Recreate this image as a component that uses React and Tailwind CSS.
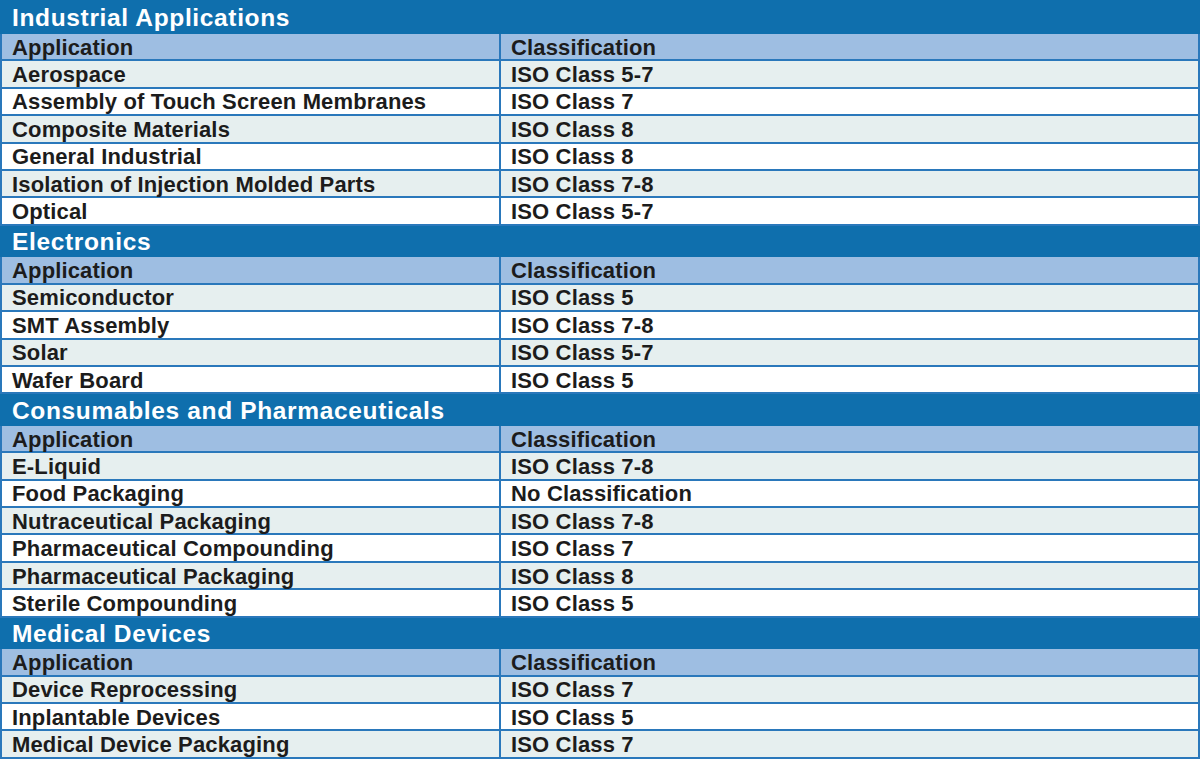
import React from "react";

const sections = [
  {
    title: "Industrial Applications",
    rows: [
      ["Aerospace", "ISO Class 5-7"],
      ["Assembly of Touch Screen Membranes", "ISO Class 7"],
      ["Composite Materials", "ISO Class 8"],
      ["General Industrial", "ISO Class 8"],
      ["Isolation of Injection Molded Parts", "ISO Class 7-8"],
      ["Optical", "ISO Class 5-7"],
    ],
  },
  {
    title: "Electronics",
    rows: [
      ["Semiconductor", "ISO Class 5"],
      ["SMT Assembly", "ISO Class 7-8"],
      ["Solar", "ISO Class 5-7"],
      ["Wafer Board", "ISO Class 5"],
    ],
  },
  {
    title: "Consumables and Pharmaceuticals",
    rows: [
      ["E-Liquid", "ISO Class 7-8"],
      ["Food Packaging", "No Classification"],
      ["Nutraceutical Packaging", "ISO Class 7-8"],
      ["Pharmaceutical Compounding", "ISO Class 7"],
      ["Pharmaceutical Packaging", "ISO Class 8"],
      ["Sterile Compounding", "ISO Class 5"],
    ],
  },
  {
    title: "Medical Devices",
    rows: [
      ["Device Reprocessing", "ISO Class 7"],
      ["Inplantable Devices", "ISO Class 5"],
      ["Medical Device Packaging", "ISO Class 7"],
    ],
  },
];

function Row({ a, b, bg }) {
  return (
    <div
      className={`flex h-[27.4px] shrink-0 border-b-2 border-[#2a78bb] text-[22px] font-bold tracking-[0.15px] leading-none text-[#1c1c1c] ${bg}`}
    >
      <div className="flex w-[501px] items-center border-l-2 border-r-2 border-[#2a78bb] pl-[10px] pt-[2px]">
        {a}
      </div>
      <div className="flex flex-1 items-center border-r-2 border-[#2a78bb] pl-[10px] pt-[2px]">
        {b}
      </div>
    </div>
  );
}

export default function App() {
  return (
    <div
      className="flex h-[760px] w-[1200px] flex-col overflow-hidden bg-white"
      style={{ fontFamily: '"Liberation Sans", Arial, sans-serif' }}
    >
      {sections.map((s, idx) => (
        <React.Fragment key={s.title}>
          <div
            className={`flex shrink-0 items-center bg-[#0f6fad] pl-[12px] pt-[2px] text-[24.5px] font-bold leading-none tracking-[0.65px] text-white ${
              idx === 0 ? "h-[34px]" : "h-[31.6px]"
            }`}
          >
            {s.title}
          </div>
          <Row a="Application" b="Classification" bg="bg-[#9ebee2]" />
          {s.rows.map((r, i) => (
            <Row
              key={r[0]}
              a={r[0]}
              b={r[1]}
              bg={i % 2 === 0 ? "bg-[#e6efef]" : "bg-white"}
            />
          ))}
        </React.Fragment>
      ))}
    </div>
  );
}
